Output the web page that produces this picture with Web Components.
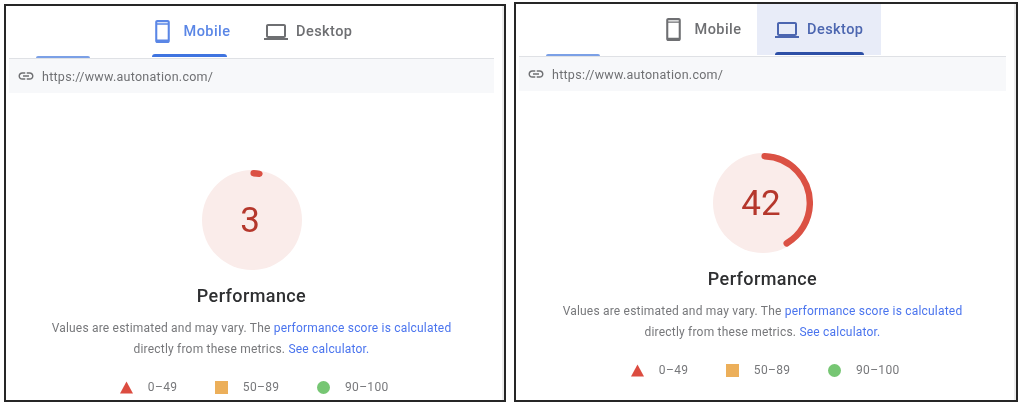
<!DOCTYPE html>
<html lang="en">
<head>
<meta charset="utf-8">
<title>PageSpeed comparison</title>
<style>
  html, body { margin: 0; background: #fff; }
  body {
    width: 1024px;
    height: 404px;
    overflow: hidden;
    display: flex;
    gap: 8px;
    padding-left: 4px;
    box-sizing: border-box;
    font-family: Roboto, "Liberation Sans", sans-serif;
  }
  #mobile { margin-top: 4px; width: 502px; height: 398px; --gauge-top: 77px; --stub-gap: 46px; }
  #desktop { margin-top: 2px; width: 504px; height: 400px; --gauge-top: 62px; --stub-gap: 47px; }
</style>
</head>
<body>
<psi-panel id="mobile" active="mobile" score="3" url="https://www.autonation.com/">
  Values are estimated and may vary. The <a href="#">performance score is calculated</a><br>
  directly from these metrics. <a href="#">See calculator.</a>
</psi-panel>
<psi-panel id="desktop" active="desktop" score="42" url="https://www.autonation.com/">
  Values are estimated and may vary. The <a href="#">performance score is calculated</a><br>
  directly from these metrics. <a href="#">See calculator.</a>
</psi-panel>

<script>
const ICONS = {
  phone: `<svg width="25" height="25" viewBox="0 0 24 24" fill="currentColor"><path d="M17 1.01L7 1c-1.1 0-2 .9-2 2v18c0 1.1.9 2 2 2h10c1.1 0 2-.9 2-2V3c0-1.1-.9-1.99-2-1.99zM7 3h10v1.2H7V3zm10 16.8H7V5.4h10v14.4z"/></svg>`,
  laptop: `<svg width="24" height="24" viewBox="0 0 24 24" fill="currentColor"><path d="M20 18c1.1 0 1.99-.9 1.99-2L22 6c0-1.1-.9-2-2-2H4c-1.1 0-2 .9-2 2v10c0 1.1.9 2 2 2H0v2h24v-2h-4zM4 6h16v10H4V6z"/></svg>`,
  link: `<svg width="18" height="18" viewBox="0 0 24 24" fill="currentColor"><path d="M3.9 12c0-1.71 1.39-3.1 3.1-3.1h4V7H7c-2.76 0-5 2.24-5 5s2.24 5 5 5h4v-1.9H7c-1.71 0-3.1-1.39-3.1-3.1zM8 13h8v-2H8v2zm9-6h-4v1.9h4c1.71 0 3.1 1.39 3.1 3.1s-1.39 3.1-3.1 3.1h-4V17h4c2.76 0 5-2.24 5-5s-2.24-5-5-5z"/></svg>`
};

class PsiTab extends HTMLElement {
  constructor() {
    super();
    const shadow = this.attachShadow({ mode: "open" });
    shadow.innerHTML = `
      <style>
        :host {
          display: flex;
          flex-direction: column;
          height: 51px;
          box-sizing: border-box;
          color: #6e6f72;
        }
        .row {
          flex: 1;
          display: flex;
          align-items: center;
          padding-top: 3px;
          font-size: 14.5px;
          font-weight: 500;
          letter-spacing: .45px;
        }
        .bar { height: 3px; border-radius: 3px 3px 0 0; visibility: hidden; }
        :host([selected]) .bar { visibility: visible; background: var(--tab-accent); }
        :host([selected]) { color: var(--tab-text); background: var(--tab-bg, transparent); }
        :host([kind="mobile"]) { width: 110px; padding-left: 16px; box-sizing: border-box; }
        :host([kind="mobile"]) .row { gap: 9px; }
        :host([kind="mobile"]) .icon { margin-left: -2.5px; }
        :host([kind="mobile"]) .bar { width: 75px; }
        :host([kind="desktop"]) { width: 124px; padding-left: 18px; box-sizing: border-box; }
        :host([kind="desktop"]) .row { gap: 8px; }
        :host([kind="desktop"]) .bar { width: 89px; }
        svg { display: block; }
      </style>
      <div class="row"><span class="icon"></span><slot></slot></div>
      <div class="bar"></div>
    `;
    shadow.querySelector(".icon").innerHTML =
      this.getAttribute("kind") === "mobile" ? ICONS.phone : ICONS.laptop;
  }
}
customElements.define("psi-tab", PsiTab);

class PsiUrlBar extends HTMLElement {
  constructor() {
    super();
    const shadow = this.attachShadow({ mode: "open" });
    shadow.innerHTML = `
      <style>
        :host {
          display: flex;
          align-items: center;
          gap: 7px;
          height: 34px;
          padding: 0 0 0 8px;
          background: #f7f8fa;
          color: #6f7073;
          font-size: 12.5px;
          letter-spacing: .27px;
        }
        svg { display: block; }
      </style>
      ${ICONS.link}<slot></slot>
    `;
  }
}
customElements.define("psi-url-bar", PsiUrlBar);

class PsiGauge extends HTMLElement {
  constructor() {
    super();
    const shadow = this.attachShadow({ mode: "open" });
    const score = Number(this.getAttribute("score"));
    // the small scores still show a short pill, as the real gauge does
    const dash = score < 5 ? 2 : score - 1;
    shadow.innerHTML = `
      <style>
        :host {
          display: grid;
          width: 100px;
          height: 100px;
          place-items: center;
        }
        svg, .num { grid-area: 1 / 1; }
        svg { display: block; }
        .num {
          font-size: 35px;
          line-height: 1;
          color: #b5372c;
          padding-right: 3px;
          padding-top: 1px;
        }
      </style>
      <svg width="100" height="100" viewBox="0 0 100 100">
        <circle cx="50" cy="50" r="50" fill="#faecea"/>
        <circle cx="50" cy="50" r="46.8" fill="none" stroke="#db5144" stroke-width="6.4"
          stroke-linecap="round" pathLength="100" stroke-dasharray="${dash} 100"
          transform="rotate(-88 50 50)"/>
      </svg>
      <div class="num">${score}</div>
    `;
  }
}
customElements.define("psi-gauge", PsiGauge);

class PsiLegend extends HTMLElement {
  constructor() {
    super();
    const shadow = this.attachShadow({ mode: "open" });
    shadow.innerHTML = `
      <style>
        :host {
          display: flex;
          justify-content: center;
          align-items: center;
          gap: 38px;
          padding-left: 6px;
          color: #77787b;
          font-size: 12px;
          letter-spacing: .35px;
        }
        .item { display: flex; align-items: center; gap: 14.5px; }
        svg { display: block; }
      </style>
      <div class="item">
        <svg width="13" height="13" viewBox="0 0 13 13"><path d="M6.5 0.5L13 12.5H0z" fill="#dc4c40"/></svg>
        <span>0–49</span>
      </div>
      <div class="item">
        <svg width="13" height="13" viewBox="0 0 13 13"><rect width="13" height="13" fill="#ecaf5a"/></svg>
        <span>50–89</span>
      </div>
      <div class="item">
        <svg width="13" height="13" viewBox="0 0 13 13"><circle cx="6.5" cy="6.5" r="6.5" fill="#76c673"/></svg>
        <span>90–100</span>
      </div>
    `;
  }
}
customElements.define("psi-legend", PsiLegend);

class PsiPanel extends HTMLElement {
  constructor() {
    super();
    const shadow = this.attachShadow({ mode: "open" });
    const active = this.getAttribute("active");
    const tabColors = active === "mobile"
      ? "--tab-accent:#3f74e0;--tab-text:#5a86e6;"
      : "--tab-accent:#2d4fa6;--tab-text:#4c66b0;--tab-bg:#e8ecf8;";
    shadow.innerHTML = `
      <style>
        :host {
          display: block;
          box-sizing: border-box;
          border: 2px solid #262626;
          background: #fff;
          box-shadow: inset -2px 0 #ececec;
          overflow: hidden;
        }
        .content {
          display: flex;
          flex-direction: column;
          padding: 0 10px 0 3px;
          filter: blur(.6px);
        }
        .tabs {
          display: flex;
          height: 52px;
          border-bottom: 1px solid #dfe1e5;
          ${tabColors}
        }
        .stub {
          align-self: flex-end;
          width: 54px;
          height: 2px;
          margin-left: 27px;
          margin-right: var(--stub-gap);
          background: #7ba0e6;
          border-radius: 2px 2px 0 0;
        }
        .score {
          display: flex;
          flex-direction: column;
          align-items: center;
          padding-top: var(--gauge-top);
        }
        h2 {
          margin: 15px 0 0;
          font-size: 18px;
          line-height: 22px;
          font-weight: 500;
          letter-spacing: .4px;
          color: #2e2f31;
        }
        .desc {
          margin: 11px 0 0;
          font-size: 12px;
          line-height: 21px;
          letter-spacing: .2px;
          color: #77787b;
          text-align: center;
        }
        ::slotted(a) { color: #4a74ee; text-decoration: none; }
        psi-legend { margin-top: 20px; align-self: stretch; }
      </style>
      <div class="content">
        <div class="tabs">
          <div class="stub"></div>
          <psi-tab kind="mobile" ${active === "mobile" ? "selected" : ""}>Mobile</psi-tab>
          <psi-tab kind="desktop" ${active === "desktop" ? "selected" : ""}>Desktop</psi-tab>
        </div>
        <psi-url-bar>${this.getAttribute("url")}</psi-url-bar>
        <div class="score">
          <psi-gauge score="${this.getAttribute("score")}"></psi-gauge>
          <h2>Performance</h2>
          <p class="desc"><slot></slot></p>
          <psi-legend></psi-legend>
        </div>
      </div>
    `;
  }
}
customElements.define("psi-panel", PsiPanel);
</script>
</body>
</html>
